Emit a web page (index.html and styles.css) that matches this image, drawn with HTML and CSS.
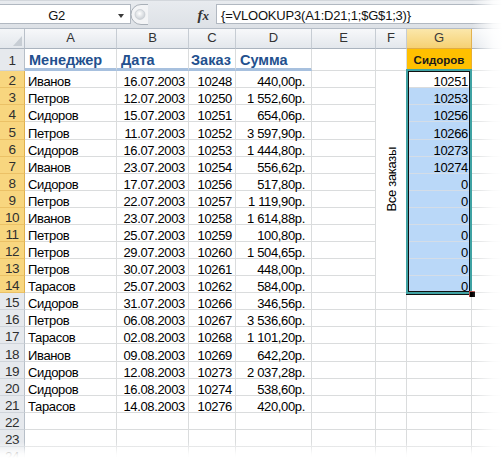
FILE: index.html
```html
<!DOCTYPE html>
<html lang="ru">
<head>
<meta charset="utf-8">
<title>Excel</title>
<link rel="stylesheet" href="styles.css">
</head>
<body>
<div class="app">
  <div class="fbar">
    <div class="namebox"><span class="name">G2</span><span class="dd"></span></div>
    <div class="mid">
      <svg class="grip" width="18" height="21" viewBox="0 0 18 21">
        <defs>
          <radialGradient id="gg" cx="0.45" cy="0.4" r="0.6">
            <stop offset="0" stop-color="#ffffff"/>
            <stop offset="1" stop-color="#c9ced4"/>
          </radialGradient>
        </defs>
        <path d="M18 0.5 H11 A10 10 0 0 0 11 20.5 H18" fill="#f3f4f6" stroke="#a9b0b8"/>
        <circle cx="10" cy="10.5" r="5" fill="url(#gg)" stroke="#c2c7cd" stroke-width="0.6"/>
      </svg>
      <span class="fx">f<span class="fxx">x</span></span>
    </div>
    <div class="formula">{=VLOOKUP3(A1:D21;1;$G$1;3)}</div>
  </div>

  <div class="sheet">
    <div class="corner"><span class="tri"></span></div>
    <div class="ch">A</div><div class="ch">B</div><div class="ch">C</div><div class="ch">D</div><div class="ch">E</div><div class="ch">F</div><div class="ch on">G</div><div class="ch"></div>

    <div class="rh r1">1</div><div class="c hd">Менеджер</div><div class="c hd">Дата</div><div class="c hd hc">Заказ</div><div class="c hd">Сумма</div><div class="c"></div><div class="c"></div><div class="c g1">Сидоров</div><div class="c"></div>

    <div class="rh on">2</div><div class="c">Иванов</div><div class="c n">16.07.2003</div><div class="c n">10248</div><div class="c n d">440,00р.</div><div class="c"></div><div class="c m"><span class="vt">Все заказы</span></div><div class="c n a">10251</div><div class="c"></div>
    <div class="rh on">3</div><div class="c">Петров</div><div class="c n">12.07.2003</div><div class="c n">10250</div><div class="c n d">1&nbsp;552,60р.</div><div class="c"></div><div class="c n s">10253</div><div class="c"></div>
    <div class="rh on">4</div><div class="c">Сидоров</div><div class="c n">15.07.2003</div><div class="c n">10251</div><div class="c n d">654,06р.</div><div class="c"></div><div class="c n s">10256</div><div class="c"></div>
    <div class="rh on">5</div><div class="c">Петров</div><div class="c n">11.07.2003</div><div class="c n">10252</div><div class="c n d">3&nbsp;597,90р.</div><div class="c"></div><div class="c n s">10266</div><div class="c"></div>
    <div class="rh on">6</div><div class="c">Сидоров</div><div class="c n">16.07.2003</div><div class="c n">10253</div><div class="c n d">1&nbsp;444,80р.</div><div class="c"></div><div class="c n s">10273</div><div class="c"></div>
    <div class="rh on">7</div><div class="c">Иванов</div><div class="c n">23.07.2003</div><div class="c n">10254</div><div class="c n d">556,62р.</div><div class="c"></div><div class="c n s">10274</div><div class="c"></div>
    <div class="rh on">8</div><div class="c">Сидоров</div><div class="c n">17.07.2003</div><div class="c n">10256</div><div class="c n d">517,80р.</div><div class="c"></div><div class="c n s">0</div><div class="c"></div>
    <div class="rh on">9</div><div class="c">Петров</div><div class="c n">22.07.2003</div><div class="c n">10257</div><div class="c n d">1&nbsp;119,90р.</div><div class="c"></div><div class="c n s">0</div><div class="c"></div>
    <div class="rh on">10</div><div class="c">Иванов</div><div class="c n">23.07.2003</div><div class="c n">10258</div><div class="c n d">1&nbsp;614,88р.</div><div class="c"></div><div class="c n s">0</div><div class="c"></div>
    <div class="rh on">11</div><div class="c">Петров</div><div class="c n">25.07.2003</div><div class="c n">10259</div><div class="c n d">100,80р.</div><div class="c"></div><div class="c n s">0</div><div class="c"></div>
    <div class="rh on">12</div><div class="c">Петров</div><div class="c n">29.07.2003</div><div class="c n">10260</div><div class="c n d">1&nbsp;504,65р.</div><div class="c"></div><div class="c n s">0</div><div class="c"></div>
    <div class="rh on">13</div><div class="c">Петров</div><div class="c n">30.07.2003</div><div class="c n">10261</div><div class="c n d">448,00р.</div><div class="c"></div><div class="c n s">0</div><div class="c"></div>
    <div class="rh on">14</div><div class="c">Тарасов</div><div class="c n">25.07.2003</div><div class="c n">10262</div><div class="c n d">584,00р.</div><div class="c"></div><div class="c n s">0</div><div class="c"></div>
    <div class="rh">15</div><div class="c">Сидоров</div><div class="c n">31.07.2003</div><div class="c n">10266</div><div class="c n d">346,56р.</div><div class="c"></div><div class="c"></div><div class="c"></div><div class="c"></div>
    <div class="rh">16</div><div class="c">Петров</div><div class="c n">06.08.2003</div><div class="c n">10267</div><div class="c n d">3&nbsp;536,60р.</div><div class="c"></div><div class="c"></div><div class="c"></div><div class="c"></div>
    <div class="rh">17</div><div class="c">Тарасов</div><div class="c n">02.08.2003</div><div class="c n">10268</div><div class="c n d">1&nbsp;101,20р.</div><div class="c"></div><div class="c"></div><div class="c"></div><div class="c"></div>
    <div class="rh">18</div><div class="c">Иванов</div><div class="c n">09.08.2003</div><div class="c n">10269</div><div class="c n d">642,20р.</div><div class="c"></div><div class="c"></div><div class="c"></div><div class="c"></div>
    <div class="rh">19</div><div class="c">Сидоров</div><div class="c n">12.08.2003</div><div class="c n">10273</div><div class="c n d">2&nbsp;037,28р.</div><div class="c"></div><div class="c"></div><div class="c"></div><div class="c"></div>
    <div class="rh">20</div><div class="c">Сидоров</div><div class="c n">16.08.2003</div><div class="c n">10274</div><div class="c n d">538,60р.</div><div class="c"></div><div class="c"></div><div class="c"></div><div class="c"></div>
    <div class="rh">21</div><div class="c">Тарасов</div><div class="c n">14.08.2003</div><div class="c n">10276</div><div class="c n d">420,00р.</div><div class="c"></div><div class="c"></div><div class="c"></div><div class="c"></div>
    <div class="rh">22</div><div class="c"></div><div class="c"></div><div class="c"></div><div class="c"></div><div class="c"></div><div class="c"></div><div class="c"></div><div class="c"></div>
    <div class="rh">23</div><div class="c"></div><div class="c"></div><div class="c"></div><div class="c"></div><div class="c"></div><div class="c"></div><div class="c"></div><div class="c"></div>
    <div class="rh">24</div><div class="c"></div><div class="c"></div><div class="c"></div><div class="c"></div><div class="c"></div><div class="c"></div><div class="c"></div><div class="c"></div>

    <div class="selframe"></div>
    <div class="handle"></div>
  </div>

  <div class="fade-r"></div>
  <div class="fade-b"></div>
</div>
</body>
</html>
```

FILE: styles.css
```css
* { box-sizing: border-box; margin: 0; padding: 0; }
html, body { width: 502px; height: 458px; overflow: hidden; background: #fff; }
body { font-family: "Liberation Sans", Arial, sans-serif; color: #000; }

.app { position: relative; width: 502px; height: 458px; overflow: hidden; }

/* formula bar */
.fbar {
  height: 29px;
  display: flex;
  align-items: flex-start;
  padding-top: 3px;
  background: linear-gradient(#e8ebef, #dde1e6);
  border-top: 1px solid #d3d7dc;
  border-bottom: 1px solid #b4bcc6;
}
.namebox {
  width: 131px;
  height: 20px;
  background: #fff;
  border: 1px solid #b1b8c1;
  border-left: none;
  display: flex;
  align-items: center;
}
.name {
  width: 113px;
  text-align: center;
  font-size: 13px;
  letter-spacing: -0.4px;
  padding-top: 3px;
  color: #111;
}
.dd {
  width: 0; height: 0;
  border-left: 3.5px solid transparent;
  border-right: 3.5px solid transparent;
  border-top: 4px solid #3a3a3a;
  margin-left: 5px;
  margin-top: 3px;
}
.mid {
  width: 85px;
  height: 20px;
  display: flex;
  align-items: center;
}
.grip { display: block; margin-left: -1px; }
.fx {
  font-family: "Liberation Serif", serif;
  font-style: italic;
  font-weight: bold;
  font-size: 15px;
  color: #333;
  margin-left: auto;
  margin-right: 7px;
  padding-top: 2px;
}
.fxx { font-size: 13px; }
.formula {
  flex: 1;
  height: 20px;
  background: #fff;
  border: 1px solid #b1b8c1;
  border-right: none;
  font-size: 13px;
  letter-spacing: -0.2px;
  padding: 3px 0 0 4px;
  color: #111;
  white-space: nowrap;
}

/* grid */
.sheet {
  position: relative;
  display: grid;
  grid-template-columns: 25px 92px 72px 47px 76px 64px 31px 65px 30px;
  grid-template-rows: 20px 22.2px;
  grid-auto-rows: 17.08px;
}
.corner {
  background: linear-gradient(#f4f6f8, #e3e7ec);
  border-right: 1px solid #b9c0c9;
  border-bottom: 1px solid #aab3be;
  display: flex;
  align-items: flex-end;
  justify-content: flex-end;
  padding: 0 2px 2px 0;
}
.tri {
  width: 0; height: 0;
  border-left: 9px solid transparent;
  border-bottom: 10px solid #c7cdd4;
}
.ch {
  background: linear-gradient(#f7f8fa, #e3e7ec);
  border-right: 1px solid #c6ccd3;
  border-bottom: 1px solid #aab3be;
  font-size: 13px;
  color: #333;
  display: flex;
  align-items: center;
  justify-content: center;
  padding-bottom: 3px;
}
.ch.on {
  background: linear-gradient(#fbe7ab, #f6d173);
  border-right-color: #e2b250;
  border-bottom-color: #e0ac45;
  color: #3a3a3a;
}
.rh {
  background: #e6e9ed;
  border-right: 1px solid #b7bfc8;
  border-bottom: 1px solid #cfd4da;
  font-size: 13.5px;
  letter-spacing: -0.4px;
  line-height: 11px;
  color: #2f2f2f;
  display: flex;
  align-items: flex-end;
  justify-content: center;
  padding-bottom: 1px;
}
.rh.r1 { padding-bottom: 4px; }
.rh.on {
  background: #f8d67f;
  border-right-color: #dfb04e;
  border-bottom-color: #ebc166;
}

.c {
  border-right: 1px solid #dadcdd;
  border-bottom: 1px solid #dadcdd;
  font-size: 13px;
  letter-spacing: -0.35px;
  line-height: 11px;
  display: flex;
  align-items: flex-end;
  padding: 0 3px 0 3px;
  white-space: nowrap;
}
.n { justify-content: flex-end; }
.d { padding-right: 6px; }
.hd {
  font-size: 14.5px;
  font-weight: bold;
  letter-spacing: 0;
  line-height: 13px;
  color: #23508e;
  border-bottom: 3px solid #a7c0de;
  padding-left: 4px;
  padding-bottom: 1px;
}
.hc { padding-left: 2px; }
.g1 {
  background: #ffc000;
  border-right-color: #e8b030;
  justify-content: center;
  font-size: 11.5px;
  font-weight: bold;
  letter-spacing: 0;
  color: #1a1a1a;
  padding-bottom: 4px;
}
.m {
  grid-row: span 13;
  align-items: center;
  justify-content: center;
  padding: 0;
}
.vt {
  writing-mode: vertical-rl;
  transform: rotate(180deg);
  font-size: 13px;
  letter-spacing: -0.3px;
  line-height: 13px;
  padding-top: 4px;
}
.s {
  background: #bad8f8;
  border-bottom-color: #d4dde7;
}
.a { background: #fff; }

/* selection frame over G2:G14 */
.selframe {
  position: absolute;
  left: 406px;
  top: 40.3px;
  width: 66px;
  height: 224.6px;
  border: 2px solid #3fa2a3;
  box-shadow: inset 0 0 0 1px #111, 0 1px 0 #111;
  pointer-events: none;
}
.handle {
  position: absolute;
  left: 468.5px;
  top: 261.8px;
  width: 6px;
  height: 6px;
  background: #000;
  border-top: 1px solid #b5504a;
  border-left: 1px solid #b5504a;
}

/* edge fades */
.fade-r {
  position: absolute;
  top: 0;
  right: 0;
  width: 30px;
  height: 458px;
  background: linear-gradient(to right, rgba(255,255,255,0), rgba(255,255,255,0.85) 70%, #fff);
}
.fade-b {
  position: absolute;
  left: 0;
  bottom: 0;
  width: 502px;
  height: 16px;
  background: linear-gradient(to bottom, rgba(255,255,255,0), rgba(255,255,255,0.9) 75%, #fff);
}
```
